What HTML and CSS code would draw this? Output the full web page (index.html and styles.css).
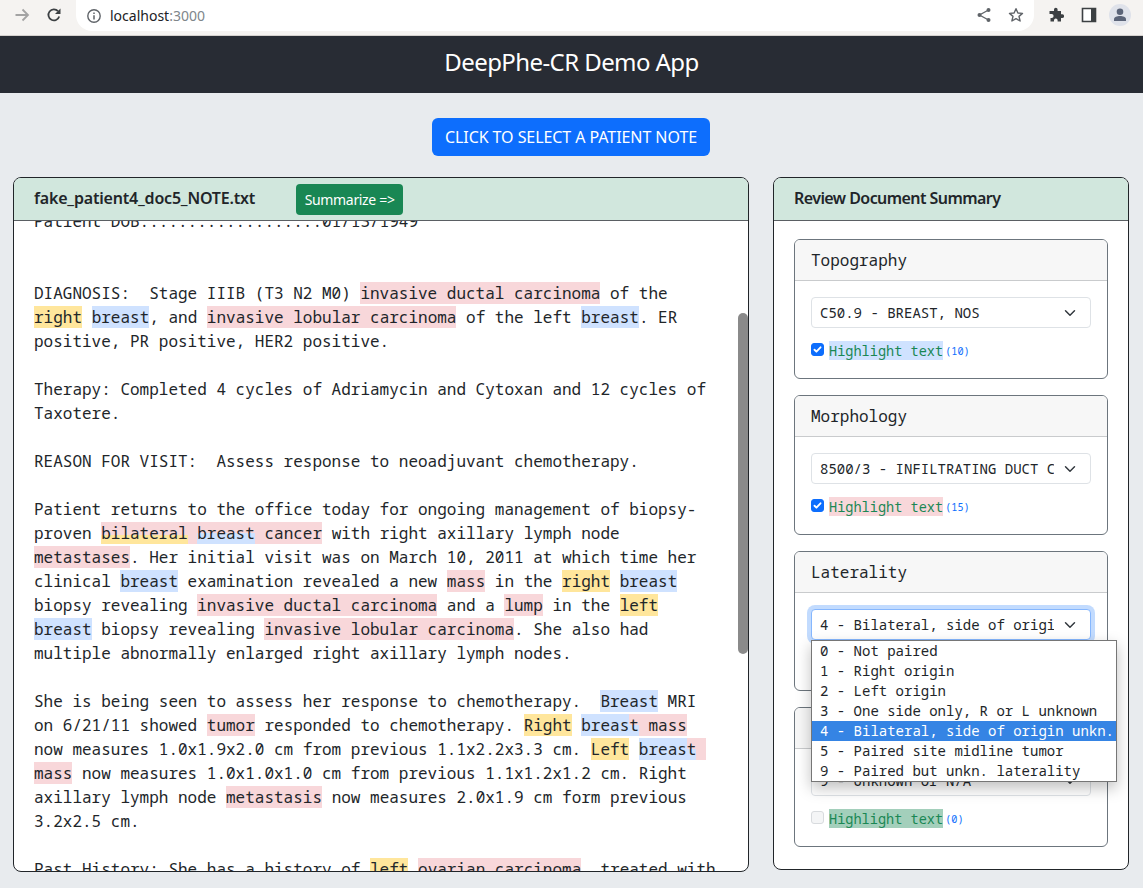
FILE: index.html
```html
<!DOCTYPE html>
<html lang="en">
<head>
<meta charset="utf-8">
<title>DeepPhe-CR Demo App</title>
<link rel="stylesheet" href="styles.css">
</head>
<body>
<div class="chrome">
  <svg class="ic ic-back" viewBox="0 0 16 16"><path d="M1.5 8H14M8.5 2.5 14 8l-5.500 5.500" fill="none" stroke="#a3a3a3" stroke-width="1.800"/></svg>
  <svg class="ic ic-reload" viewBox="0 0 16 16"><path d="M13.200 9.500A5.500 5.500 0 1 1 12 4.200" fill="none" stroke="#3c4043" stroke-width="1.800"/><path d="M14.500 1.500v5.500H9z" fill="#3c4043"/></svg>
  <div class="omnibox">
    <svg class="ic-info" viewBox="0 0 16 16"><circle cx="8" cy="8" r="6.200" fill="none" stroke="#5f6368" stroke-width="1.400"/><path d="M8 7.200v4.300M8 4.400v1.500" stroke="#5f6368" stroke-width="1.500"/></svg>
    <span class="url">localhost<span class="port">:3000</span></span>
    <svg class="ic-share" viewBox="0 0 16 16"><path d="M12.500 3 3.500 8l9 5" fill="none" stroke="#5f6368" stroke-width="1.300"/><circle cx="12.500" cy="3" r="2" fill="#5f6368"/><circle cx="3.500" cy="8" r="2" fill="#5f6368"/><circle cx="12.500" cy="13" r="2" fill="#5f6368"/></svg>
    <svg class="ic-star" viewBox="0 0 16 16"><path d="M8 1.700l1.900 4.300 4.600.4-3.500 3 1.100 4.600L8 11.600 3.900 14l1.100-4.600-3.500-3 4.600-.4z" fill="none" stroke="#5f6368" stroke-width="1.400" stroke-linejoin="round"/></svg>
  </div>
  <svg class="ic ic-puzzle" viewBox="0 0 16 16"><path d="M6 2.500a1.800 1.800 0 0 1 3.600 0V4h3.400v3.300h1.200a1.900 1.900 0 0 1 0 3.800H13V14.500H9.600v-1.300a1.800 1.800 0 0 0-3.600 0v1.300H2.500v-3.600h1.200a1.900 1.900 0 0 0 0-3.800H1.500V4H6z" fill="#3c4043"/></svg>
  <svg class="ic ic-panel" viewBox="0 0 16 16"><path d="M1.500 1.500h13v13h-13z" fill="#fff" stroke="#3c4043" stroke-width="1.600"/><path d="M10 1.500h4.500v13H10z" fill="#3c4043"/></svg>
  <div class="avatar"><svg viewBox="0 0 22 22"><circle cx="11" cy="7.800" r="3.300" fill="#5b6478"/><path d="M5 17v-1.800c0-2 3-3.200 6-3.200s6 1.200 6 3.200V17z" fill="#5b6478"/></svg></div>
</div>

<header class="navbar">DeepPhe-CR Demo App</header>

<main class="page">
  <div class="select-row"><button class="btn btn-select">CLICK TO SELECT A PATIENT NOTE</button></div>
  <div class="columns">
    <section class="card note-card">
      <div class="card-head">
        <span class="head-title title-file">fake_patient4_doc5_NOTE.txt</span>
        <button class="btn btn-sum">Summarize =&gt;</button>
      </div>
      <div class="note-body">
        <div class="note">Patient DOB:..................01/13/1949


DIAGNOSIS:  Stage IIIB (T3 N2 M0) <mark class="r">invasive ductal carcinoma</mark> of the <mark class="y">right</mark> <mark class="b">breast</mark>, and <mark class="r">invasive lobular carcinoma</mark> of the left <mark class="b">breast</mark>. ER positive, PR positive, HER2 positive.

Therapy: Completed 4 cycles of Adriamycin and Cytoxan and 12 cycles of Taxotere.

REASON FOR VISIT:  Assess response to neoadjuvant chemotherapy.

Patient returns to the office today for ongoing management of biopsy-proven <mark class="r"><mark class="y low">bilateral</mark> <mark class="b low">breast</mark> cancer</mark> with right axillary lymph node <mark class="r">metastases</mark>. Her initial visit was on March 10, 2011 at which time her clinical <mark class="b">breast</mark> examination revealed a new <mark class="r">mass</mark> in the <mark class="y">right</mark> <mark class="b">breast</mark> biopsy revealing <mark class="r">invasive ductal carcinoma</mark> and a <mark class="r">lump</mark> in the <mark class="y">left</mark> <mark class="b">breast</mark> biopsy revealing <mark class="r">invasive lobular carcinoma</mark>. She also had multiple abnormally enlarged right axillary lymph nodes.

She is being seen to assess her response to chemotherapy.  <mark class="b">Breast</mark> MRI on 6/21/11 showed <mark class="r">tumor</mark> responded to chemotherapy. <mark class="y">Right</mark> <mark class="r"><mark class="b">breas</mark><mark class="b low">t</mark> mass</mark> now measures 1.0x1.9x2.0 cm from previous 1.1x2.2x3.3 cm. <mark class="y">Left</mark> <mark class="r"><mark class="b">breas</mark><mark class="b low">t</mark> mass</mark> now measures 1.0x1.0x1.0 cm from previous 1.1x1.2x1.2 cm. Right axillary lymph node <mark class="r">metastasis</mark> now measures 2.0x1.9 cm form previous 3.2x2.5 cm.

Past History: She has a history of <mark class="y">left</mark> <mark class="r">ovarian carcinoma</mark>, treated with</div>
        <div class="thumb"></div>
      </div>
    </section>

    <section class="card summary-card">
      <div class="card-head"><span class="head-title title-review">Review Document Summary</span></div>
      <div class="summary-body">
        <div class="field">
          <div class="field-head">Topography</div>
          <div class="field-body">
            <select class="sel"><option>C50.9 - BREAST, NOS</option></select>
            <label class="check"><span class="box on"></span><span class="hl hl-b">Highlight text</span><span class="count">(10)</span></label>
          </div>
        </div>
        <div class="field">
          <div class="field-head">Morphology</div>
          <div class="field-body">
            <select class="sel"><option>8500/3 - INFILTRATING DUCT CARCINOMA, NOS</option></select>
            <label class="check"><span class="box on"></span><span class="hl hl-r">Highlight text</span><span class="count">(15)</span></label>
          </div>
        </div>
        <div class="field">
          <div class="field-head">Laterality</div>
          <div class="field-body">
            <select class="sel focus"><option>4 - Bilateral, side of origin unkn.</option></select>
            <label class="check"><span class="box on"></span><span class="hl hl-y">Highlight text</span><span class="count">(9)</span></label>
            <ul class="menu">
              <li>0 - Not paired</li>
              <li>1 - Right origin</li>
              <li>2 - Left origin</li>
              <li>3 - One side only, R or L unknown</li>
              <li class="active">4 - Bilateral, side of origin unkn.</li>
              <li>5 - Paired site midline tumor</li>
              <li>9 - Paired but unkn. laterality</li>
            </ul>
          </div>
        </div>
        <div class="field">
          <div class="field-head">Grade</div>
          <div class="field-body">
            <select class="sel"><option>9 - Unknown or N/A</option></select>
            <label class="check"><span class="box off"></span><span class="hl hl-g">Highlight text</span><span class="count">(0)</span></label>
          </div>
        </div>
      </div>
    </section>
  </div>
</main>
</body>
</html>
```
FILE: styles.css
```css
* { box-sizing: border-box; }
html, body { margin: 0; height: 888px; overflow: hidden; }
body { background: #e8ebee; font-family: "Noto Sans", sans-serif; color: #212529; font-size: 16px; }

.chrome { position: relative; height: 36px; background: #f5f3f1; border-bottom: 1px solid #d5d1ce; display: flex; align-items: flex-start; }
.ic { position: absolute; top: 7px; width: 16px; height: 16px; }
.ic-back { left: 14px; }
.ic-reload { left: 46px; }
.ic-puzzle { left: 1048px; }
.ic-panel { left: 1081px; }
.omnibox { position: absolute; left: 76px; top: 0; width: 958px; height: 31px; background: #fff; border-radius: 0 0 16px 16px / 0 0 16px 16px; display: flex; align-items: center; padding-left: 10px; }
.ic-info { width: 16px; height: 16px; }
.url { margin-left: 8px; font-size: 14px; color: #202124; }
.port { color: #80868b; }
.ic-share { position: absolute; left: 900px; top: 7px; width: 16px; height: 16px; }
.ic-star { position: absolute; left: 932px; top: 7px; width: 16px; height: 16px; }
.avatar { position: absolute; left: 1109px; top: 4px; width: 22px; height: 22px; border-radius: 50%; background: #dfe2ea; }
.avatar svg { display: block; width: 22px; height: 22px; }

.navbar { height: 57px; background: #282c34; color: #fff; display: flex; align-items: center; justify-content: center; font-size: 24px; letter-spacing: -.58px; padding-bottom: 7px; }

.page { padding: 25px 14px 0 13px; }
.select-row { display: flex; justify-content: center; margin-bottom: 21px; }
.btn { border: 0; color: #fff; font-family: inherit; border-radius: 6px; }
.btn-select { background: #0d6efd; height: 38px; width: 278px; font-size: 16px; letter-spacing: -.07px; padding: 0; }
.btn-sum { background: #198754; height: 31px; width: 107px; font-size: 14px; letter-spacing: -.33px; padding: 0; border-radius: 4px; margin-left: 41px; }

.columns { display: flex; align-items: flex-start; gap: 24px; }
.card { background: #fff; border: 1px solid #212529; border-radius: 8px; overflow: hidden; }
.note-card { width: 736px; height: 695px; display: flex; flex-direction: column; }
.summary-card { width: 356px; }
.card-head { height: 43px; background: #d1e7dd; border-bottom: 1px solid #5a5f63; padding: 0 20px 2px; display: flex; align-items: center; flex: none; }
.card-head .btn-sum { margin-top: 2px; }
.head-title { font-weight: 600; font-size: 16px; color: #212529; }
.title-file { letter-spacing: -.19px; }
.title-review { letter-spacing: -.56px; }

.note-body { position: relative; flex: 1; overflow: hidden; }
.note { margin-top: -12px; padding: 0 32px 0 20px; font-family: "Noto Sans Mono", "DejaVu Sans Mono", monospace; font-size: 16px; line-height: 24px; white-space: pre-wrap; color: #212529; }
.thumb { position: absolute; top: 92px; left: 724px; width: 10px; height: 341px; background: #8a8a8a; border-radius: 5px; }
mark { color: inherit; }
mark.r { background: #f8d7da; }
mark.b { background: #cfe2ff; }
mark.y { background: #ffe69c; }
mark.b.low { background: linear-gradient(transparent 52%, #cfe2ff 52%); }
mark.y.low { background: linear-gradient(transparent 60%, #ffe69c 60%); }

.summary-body { padding: 18px 20px 22px; display: flex; flex-direction: column; gap: 16px; font-family: "Noto Sans Mono", "DejaVu Sans Mono", monospace; }
.field { border: 1px solid #6c757d; border-radius: 6px; height: 140px; background: #fff; }
.field-head { height: 41px; background: #f7f7f7; border-bottom: 1px solid #c9cbcd; border-radius: 5px 5px 0 0; padding: 0 16px; display: flex; align-items: center; font-size: 16px; color: #212529; }
.field-body { position: relative; padding: 16px; }
.sel { display: block; width: 280px; height: 31px; appearance: none; -webkit-appearance: none; border: 1px solid #dee2e6; border-radius: 4px; padding: 0 36px 0 8px; font-family: inherit; font-size: 14px; color: #212529; background-color: #fff; background-image: url("data:image/svg+xml,%3csvg xmlns='http://www.w3.org/2000/svg' viewBox='0 0 16 16'%3e%3cpath fill='none' stroke='%23343a40' stroke-linecap='round' stroke-linejoin='round' stroke-width='2' d='m2 5 6 6 6-6'/%3e%3c/svg%3e"); background-repeat: no-repeat; background-position: right 12px center; background-size: 16px 12px; outline: none; }
.sel.focus { border-color: #86b7fe; box-shadow: 0 0 0 4px rgba(13,110,253,.25); }
.check { display: flex; align-items: center; margin-top: 12px; height: 20px; }
.box { width: 13px; height: 13px; border-radius: 3px; flex: none; margin-right: 5px; margin-top: -1px; border: 1px solid #dee2e6; background-color: #fff; }
.box.on { background-color: #0d6efd; border-color: #0d6efd; background-image: url("data:image/svg+xml,%3csvg xmlns='http://www.w3.org/2000/svg' viewBox='0 0 20 20'%3e%3cpath fill='none' stroke='%23fff' stroke-linecap='round' stroke-linejoin='round' stroke-width='3.400' d='m4.500 10.500 3.500 3.500 7.500-8'/%3e%3c/svg%3e"); background-size: contain; }
.box.off { background-color: #f4f5f6; border-color: #d8dbde; }
.hl { font-size: 13.6px; color: #198754; }
.hl-b { background: #cfe2ff; }
.hl-r { background: #f8d7da; }
.hl-y { background: #ffe69c; }
.hl-g { background: #a3cfbb; }
.count { font-size: 10.2px; color: #0d6efd; margin-left: 2px; margin-top: 2px; }

.menu { position: absolute; left: 16px; top: 47px; width: 306px; margin: 0; padding: 0; list-style: none; background: #fff; border: 1px solid #767676; box-shadow: 0 6px 14px rgba(0,0,0,.25); z-index: 5; font-size: 14px; color: #212529; }
.menu li { height: 20px; line-height: 20px; padding-left: 8px; white-space: nowrap; }
.menu li.active { background: #3584e4; color: #fff; }
```
